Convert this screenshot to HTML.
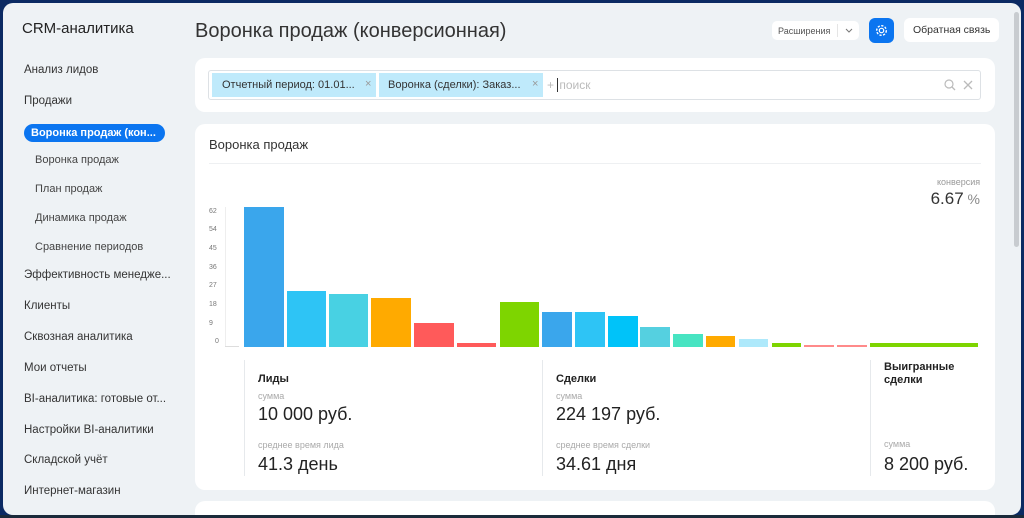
<!DOCTYPE html>
<html style="width:1024px;height:518px;overflow:hidden"><head><meta charset="utf-8"><style>
*{margin:0;padding:0;box-sizing:border-box}
body{width:1024px;height:518px;overflow:hidden;background:#0b2a63;font-family:"Liberation Sans","DejaVu Sans",sans-serif;position:relative}
.app{position:absolute;left:3px;top:3px;width:1018px;height:512px;background:#eef2f5;border-radius:10px;overflow:hidden}
.a{position:absolute;white-space:nowrap}
.side{font-size:11.5px;color:#333}
.sub{font-size:11px;color:#444}
.card{position:absolute;background:#fff;border-radius:10px}
.bar{position:absolute}
.yl{position:absolute;font-size:7px;color:#777;left:209px}
.lab{font-size:11px;font-weight:bold;color:#222}
.g{font-size:9px;color:#aaa}
.big{font-size:18px;color:#222}
.sep{position:absolute;width:1px;background:#e6e9ec;top:360px;height:116px}
</style></head><body>
<div class="app"></div>
<div class="a" style="left:22px;top:20px;font-size:15px;color:#222">CRM-аналитика</div>
<div class="a" style="left:195px;top:20px;font-size:20px;color:#333">Воронка продаж (конверсионная)</div>
<div class="a side" style="left:24px;top:64px">Анализ лидов</div>
<div class="a side" style="left:24px;top:95px">Продажи</div>
<div class="a" style="left:24px;top:124px;width:141px;height:18px;background:#0b75f0;border-radius:9px;color:#fff;font-size:11px;font-weight:bold;padding:3px 0 0 7px">Воронка продаж (кон...</div>
<div class="a sub" style="left:35px;top:154px">Воронка продаж</div>
<div class="a sub" style="left:35px;top:183px">План продаж</div>
<div class="a sub" style="left:35px;top:212px">Динамика продаж</div>
<div class="a sub" style="left:35px;top:241px">Сравнение периодов</div>
<div class="a side" style="left:24px;top:269px">Эффективность менедже...</div>
<div class="a side" style="left:24px;top:300px">Клиенты</div>
<div class="a side" style="left:24px;top:331px">Сквозная аналитика</div>
<div class="a side" style="left:24px;top:362px">Мои отчеты</div>
<div class="a side" style="left:24px;top:393px">BI-аналитика: готовые от...</div>
<div class="a side" style="left:24px;top:424px">Настройки BI-аналитики</div>
<div class="a side" style="left:24px;top:454px">Складской учёт</div>
<div class="a side" style="left:24px;top:485px">Интернет-магазин</div>

<div class="a" style="left:772px;top:21px;width:87px;height:19px;background:#fff;border-radius:5px;font-size:9px;color:#555;padding:5px 0 0 6px">Расширения<span style="position:absolute;left:65px;top:3px;width:1px;height:13px;background:#e5e5e5"></span><svg style="position:absolute;left:73px;top:7px" width="8" height="5"><path d="M1 1L4 4L7 1" stroke="#777" fill="none"/></svg></div>
<div class="a" style="left:869px;top:18px;width:25px;height:25px;background:#0b75f0;border-radius:6px"><svg width="25" height="25" viewBox="0 0 25 25"><circle cx="12.5" cy="12.5" r="2.2" stroke="#fff" fill="none" stroke-width="1.2"/><circle cx="12.5" cy="12.5" r="4.8" stroke="#fff" fill="none" stroke-width="1.4" stroke-dasharray="2.2 1.5"/></svg></div>
<div class="a" style="left:904px;top:18px;width:95px;height:24px;background:#fff;border-radius:6px;font-size:10.5px;color:#333;padding:6px 0 0 9px">Обратная связь</div>

<div class="card" style="left:195px;top:58px;width:800px;height:54px"></div>
<div class="a" style="left:208px;top:70px;width:773px;height:30px;border:1px solid #dde1e5;border-radius:3px"></div>
<div class="a" style="left:212px;top:73px;width:164px;height:24px;background:#bfeafb;font-size:11px;color:#333;padding:6px 0 0 10px">Отчетный период: 01.01...<span style="position:absolute;left:153px;top:5px;color:#999;font-size:11px">×</span></div>
<div class="a" style="left:379px;top:73px;width:164px;height:24px;background:#bfeafb;font-size:11px;color:#333;padding:6px 0 0 9px">Воронка (сделки): Заказ...<span style="position:absolute;left:153px;top:5px;color:#999;font-size:11px">×</span></div>
<div class="a" style="left:547px;top:78px;font-size:12px;color:#bbb">+ <span style="border-left:1px solid #333;padding-left:1px">поиск</span></div>
<svg class="a" style="left:944px;top:79px" width="12" height="12"><circle cx="5" cy="5" r="4" stroke="#bbb" fill="none" stroke-width="1.2"/><path d="M8 8L11 11" stroke="#bbb" stroke-width="1.3"/></svg>
<svg class="a" style="left:963px;top:80px" width="10" height="10"><path d="M1 1L9 9M9 1L1 9" stroke="#bbb" stroke-width="1.3"/></svg>

<div class="card" style="left:195px;top:124px;width:800px;height:366px"></div>
<div class="a" style="left:209px;top:137px;font-size:13px;color:#333">Воронка продаж</div>
<div class="a" style="left:209px;top:163px;width:772px;height:1px;background:#eef0f2"></div>
<div class="a" style="left:937px;top:177px;font-size:9px;color:#999">конверсия</div>
<div class="a" style="right:44px;top:189px;font-size:17px;color:#333">6.67<span style="font-size:14px;color:#888"> %</span></div>

<div class="yl" style="top:208px">62</div><div class="yl" style="top:226px">54</div><div class="yl" style="top:245px">45</div><div class="yl" style="top:264px">36</div><div class="yl" style="top:282px">27</div><div class="yl" style="top:301px">18</div><div class="yl" style="top:320px">9</div><div class="yl" style="top:338px;left:215px">0</div>
<div class="a" style="left:225px;top:207px;width:1px;height:140px;background:#eee"></div>
<div class="a" style="left:225px;top:346px;width:14px;height:1px;background:#ddd"></div>

<div class="bar" style="left:244px;top:207px;width:40px;height:140px;background:#3aa6ec"></div>
<div class="bar" style="left:287px;top:291px;width:39px;height:56px;background:#2ec4f5"></div>
<div class="bar" style="left:329px;top:294px;width:39px;height:53px;background:#48d1e3"></div>
<div class="bar" style="left:371px;top:298px;width:40px;height:49px;background:#ffaa00"></div>
<div class="bar" style="left:414px;top:323px;width:40px;height:24px;background:#ff5a5a"></div>
<div class="bar" style="left:457px;top:343px;width:39px;height:4px;background:#ff5a5a"></div>
<div class="bar" style="left:500px;top:302px;width:39px;height:45px;background:#7ed500"></div>
<div class="bar" style="left:542px;top:312px;width:30px;height:35px;background:#3aa6ec"></div>
<div class="bar" style="left:575px;top:312px;width:30px;height:35px;background:#2ec4f5"></div>
<div class="bar" style="left:608px;top:316px;width:30px;height:31px;background:#00c3f9"></div>
<div class="bar" style="left:640px;top:327px;width:30px;height:20px;background:#55d0e0"></div>
<div class="bar" style="left:673px;top:334px;width:30px;height:13px;background:#47e4c2"></div>
<div class="bar" style="left:706px;top:336px;width:29px;height:11px;background:#ffaa00"></div>
<div class="bar" style="left:739px;top:339px;width:29px;height:8px;background:#aee9fb"></div>
<div class="bar" style="left:772px;top:343px;width:29px;height:4px;background:#7ed500"></div>
<div class="bar" style="left:804px;top:345px;width:30px;height:2px;background:#ff8a8a"></div>
<div class="bar" style="left:837px;top:345px;width:30px;height:2px;background:#ff8a8a"></div>
<div class="bar" style="left:870px;top:343px;width:108px;height:4px;background:#7ed500"></div>

<div class="sep" style="left:244px"></div><div class="sep" style="left:542px"></div><div class="sep" style="left:870px"></div>
<div class="a lab" style="left:258px;top:373px">Лиды</div>
<div class="a g" style="left:258px;top:391px">сумма</div>
<div class="a big" style="left:258px;top:404px">10 000 руб.</div>
<div class="a g" style="left:258px;top:440px">среднее время лида</div>
<div class="a big" style="left:258px;top:454px">41.3 день</div>
<div class="a lab" style="left:556px;top:373px">Сделки</div>
<div class="a g" style="left:556px;top:391px">сумма</div>
<div class="a big" style="left:556px;top:404px">224 197 руб.</div>
<div class="a g" style="left:556px;top:440px">среднее время сделки</div>
<div class="a big" style="left:556px;top:454px">34.61 дня</div>
<div class="a lab" style="left:884px;top:361px;line-height:13px">Выигранные<br>сделки</div>
<div class="a g" style="left:884px;top:439px">сумма</div>
<div class="a big" style="left:884px;top:454px">8 200 руб.</div>

<div class="card" style="left:195px;top:501px;width:800px;height:14px;border-radius:10px 10px 0 0"></div>
<div class="a" style="left:1014px;top:12px;width:5px;height:235px;background:#c8ccd0;border-radius:3px"></div>
<div class="a" style="left:0;top:515px;width:1024px;height:3px;background:#1a2a3a"></div>
</body></html>
